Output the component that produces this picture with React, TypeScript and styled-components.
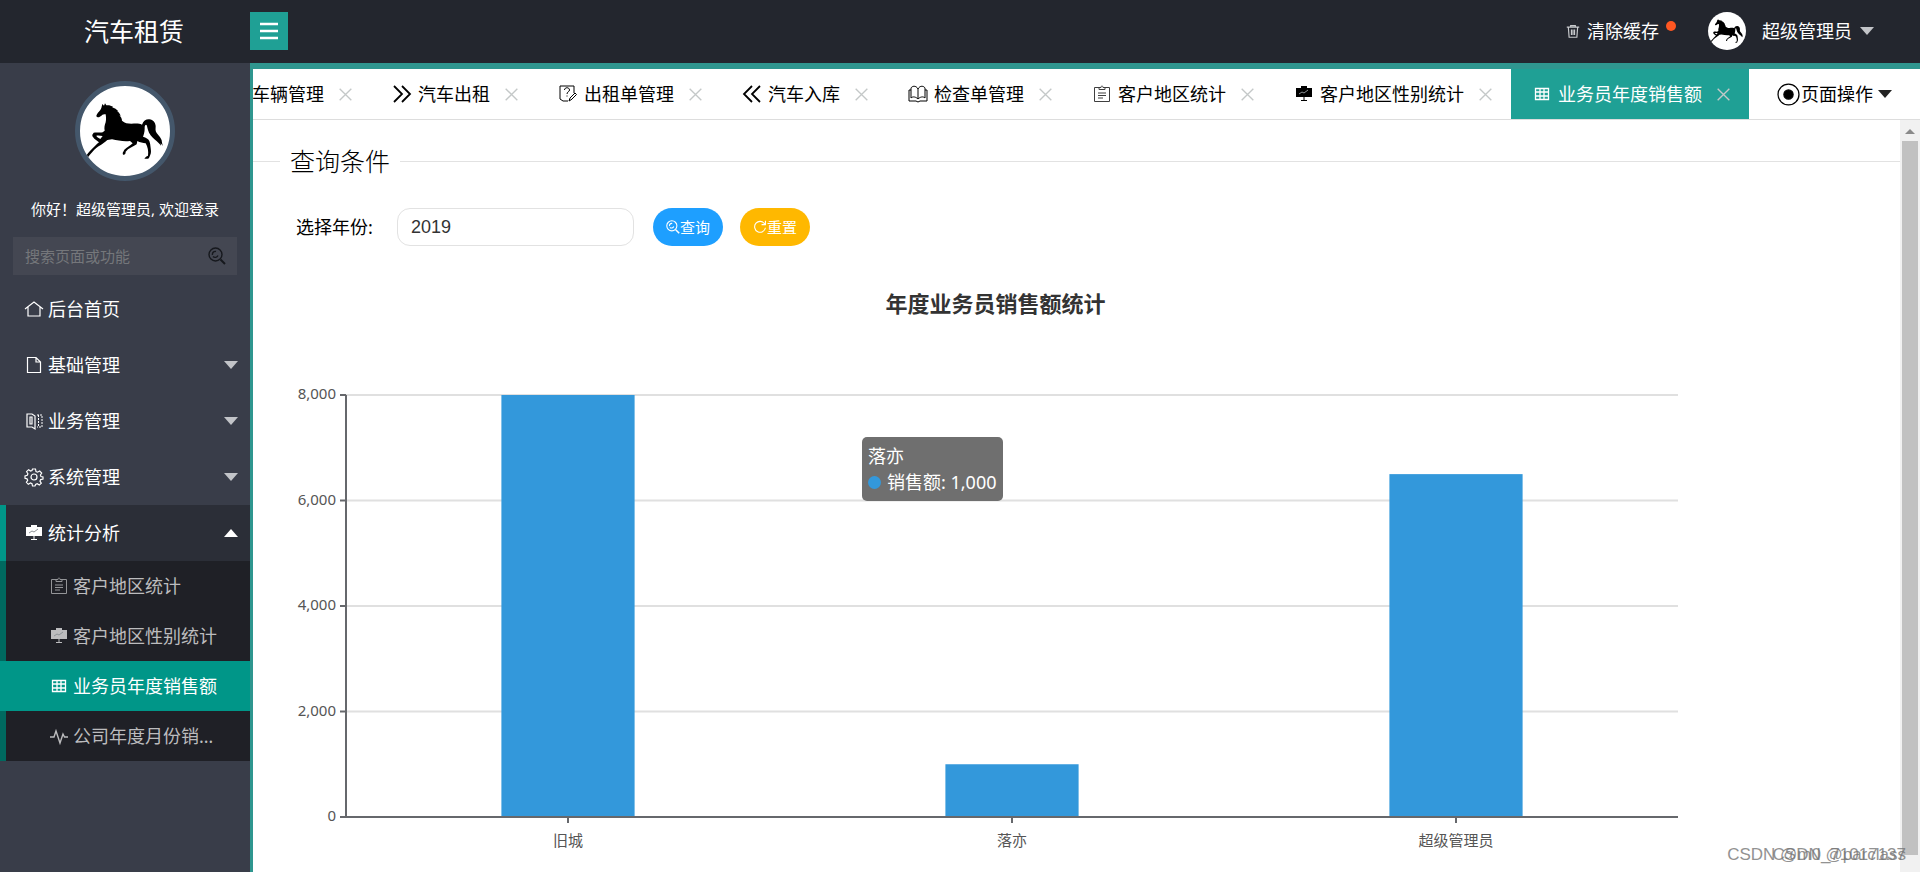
import { ReactNode, useState } from "react";
import styled, { createGlobalStyle } from "styled-components";

const TEAL = "#1fa095";

type Tab = { icon: string; label: string };
type Sale = { name: string; value: number };

const TABS: Tab[] = [
  { icon: "car", label: "车辆管理" },
  { icon: "next", label: "汽车出租" },
  { icon: "survey", label: "出租单管理" },
  { icon: "prev", label: "汽车入库" },
  { icon: "book", label: "检查单管理" },
  { icon: "form", label: "客户地区统计" },
  { icon: "board", label: "客户地区性别统计" },
  { icon: "table", label: "业务员年度销售额" },
];

const MENU: Tab[] = [
  { icon: "home", label: "后台首页" },
  { icon: "file", label: "基础管理" },
  { icon: "read", label: "业务管理" },
  { icon: "gear", label: "系统管理" },
  { icon: "board", label: "统计分析" },
];

const SUB_MENU: Tab[] = [
  { icon: "form", label: "客户地区统计" },
  { icon: "board", label: "客户地区性别统计" },
  { icon: "table", label: "业务员年度销售额" },
  { icon: "pulse", label: "公司年度月份销售额" },
];

const SALES: Sale[] = [
  { name: "旧城", value: 8000 },
  { name: "落亦", value: 1000 },
  { name: "超级管理员", value: 6500 },
];

const MAX = 8000;
const STEPS = [8000, 6000, 4000, 2000, 0];
const PLOT_HEIGHT = 422;

const ICONS: Record<string, ReactNode> = {
  car: <path d="M2 11V8l2-4h10l2 4v6H2z" />,
  next: <path d="M1 1l8 8-8 8M9 1l8 8-8 8" strokeWidth="1.8" />,
  prev: <path d="M9 1L1 9l8 8M17 1L9 9l8 8" strokeWidth="1.8" />,
  survey: (
    <>
      <path d="M15 8V1H1v13l3 2h5M5.500 5c0-3 5-3 5 0 0 2-2.500 1.500-2.500 4M8 10.500v1" />
      <path d="M10 16l1-3 5-5 1.500 1.500-5 5zM12 15l4-4" />
    </>
  ),
  book: (
    <>
      <path d="M9 4C7 0 3 1 2 3v10c2-2 5-1 7 1 2-2 5-3 7-1V3c-1-2-5-3-7 1zM9 4v10" />
      <path d="M2 5H0v11h7l2 1 2-1h7V5h-2" />
    </>
  ),
  form: (
    <g opacity="0.75">
      <path d="M6 2.500H1.500v14h15v-14H12" />
      <path d="M6 4.500v-2h2c0-2 2-2 2 0h2v2zM5 8h8M5 10.500h8M5 13h5" />
    </g>
  ),
  board: (
    <>
      <path
        d="M1 3h5V1h6v2h5v9H1z"
        fill="currentColor"
        stroke="none"
      />
      <path d="M9 12v3M6 15.500h6" />
      <path d="M4 9l3-2 2 1 4-3" stroke="#8d9296" />
    </>
  ),
  table: (
    <path
      d="M2.500 3.500h13v11h-13zM2.500 7h13M2.500 11h13M7 3.500v11M11 3.500v11"
      strokeWidth="1.300"
    />
  ),
  pulse: <path d="M0 10h4l2-6 4 12 3-9 1.500 3H18" strokeWidth="1.400" />,
  home: <path d="M0 9l9-7 9 7M3 7v9h12V7" strokeWidth="1.200" />,
  file: (
    <path
      d="M2.500 1.500H11l4.500 4.500v10.500h-13zM11 1.500V6h4.500"
      strokeWidth="1.200"
    />
  ),
  read: (
    <>
      <path d="M2 2h5l3 2v13l-3-2H2zM5 5h2v7H5z" strokeWidth="1.200" />
      <path d="M12 3h5v12h-5M13.500 3v12" strokeDasharray="2 1" />
    </>
  ),
  gear: (
    <g strokeWidth="1.200">
      <path d="M7.500 1h3l.5 2.500 1.500.7L14.700 3l2 2-1.300 2 .6 1.600 2 .4v2l-2.400.6-.6 1.500 1.300 2-2 2-2.100-1.300-1.600.7-.6 1.500h-2.500L7 15.600l-1.500-.6-2.200 1.300-1.900-2 1.300-2L2 10.800 0 10.300V8l2.300-.7.6-1.500L1.600 3.700l2-2 2 1.400L7 2.500z" />
      <circle cx="9" cy="9" r="3" />
    </g>
  ),
  search: (
    <g strokeWidth="1.400">
      <circle cx="7.500" cy="7.500" r="6.500" />
      <path d="M4.500 8c-.5-2.500 1.500-4 3.500-3.500M5 9.500c1.500 1.500 4 1 5-1" />
      <path d="M12.500 12.500l4.500 4.500" strokeWidth="2" />
    </g>
  ),
  refresh: <path d="M15 5a7 7 0 1 0 1 5M16 1v5h-5" strokeWidth="1.400" />,
  trash: (
    <path
      d="M1 4h16M6 4V2h6v2M3 4l1 13h10l1-13M7 7v7M9 7v7M11 7v7"
      strokeWidth="1.500"
      stroke="#c8cacd"
    />
  ),
  close: <path d="M2 2l14 14M16 2L2 16" strokeWidth="1.600" />,
  menu: <path d="M0 2h18M0 9h18M0 16h18" strokeWidth="2.400" />,
  target: (
    <>
      <circle cx="9" cy="9" r="8.200" />
      <circle cx="9" cy="9" r="3.600" fill="currentColor" />
    </>
  ),
};

const Icon = ({ name, size = 18 }: { name: string; size?: number }) => (
  <IconSvg viewBox="0 0 18 18" width={size} height={size} aria-hidden="true">
    {ICONS[name]}
  </IconSvg>
);

const Horse = () => (
  <svg viewBox="60 46 270 270" width="100%" height="100%" aria-hidden="true">
    <path d="M124 112l3-12 5 5 3-7 4 6c8-1 14 1 21 5l-4 1c8 2 14 6 19 12l-4-1c6 4 9 9 11 15l-4-2c5 5 8 10 8 16 8 7 17 9 28 9 12 0 22-2 32 3 4-12 13-17 22-16 12 2 18 10 19 20 0 9-2 14 3 21 8 10 13 15 15 22 1 6 1 11 4 17l-7-8 1 7c-5-8-12-13-18-18-10-8-18-17-21-29-3-9-2-15-6-16-4 1-4 5-4 12 0 10-3 18-5 24 9 3 16 6 19 13 3 8 3 14 4 21 1 8 2 14-1 20l-4 10c-3 3-9 3-14 2l5-6 6-3c2-13-1-27-7-37-8-2-17-2-25-7l-2 10c-8 6-18 9-26 15l-7 7c0 6-2 10-8 9l-1-5 5-10c8-7 17-12 25-19l-8-7c-19 2-36-1-54-5l-14 2c-9 7-14 12-21 16-9 5-16 11-22 18l-10 11-5 7-6-4c6-8 11-14 17-20 9-8 14-16 22-21l-14-11c-4-5-7-8-6-12l4-6c10-2 18 1 27-1l6-5c-2-9 0-17 3-25 2-9 1-16 0-24-8-2-10 2-14 5l-6 4c-5 0-8-1-8-5 2-6 7-11 12-17zM109 195c1 4 7 7 12 10l7-9c-7-1-13-2-19-1z" />
  </svg>
);

const BarChart = () => {
  const y = (value: number) => PLOT_HEIGHT - (value / MAX) * PLOT_HEIGHT;
  const slot = 100 / SALES.length;

  return (
    <Plot>
      <PlotSvg role="img" aria-label="年度业务员销售额统计">
        {STEPS.map((step) => (
          <g key={step}>
            <line
              x1="0"
              x2="100%"
              y1={y(step)}
              y2={y(step)}
              stroke="#e0e0e0"
            />
            <line x1="-6" x2="0" y1={y(step)} y2={y(step)} stroke="#66686c" />
            <text x="-10" y={y(step) + 4} textAnchor="end">
              {step.toLocaleString("en-US")}
            </text>
          </g>
        ))}
        {SALES.map((sale, i) => (
          <g key={sale.name}>
            <rect
              x={`${slot * (i + 0.35)}%`}
              width={`${slot * 0.3}%`}
              y={y(sale.value)}
              height={PLOT_HEIGHT - y(sale.value)}
              fill="#3398db"
            />
            <line
              x1={`${slot * (i + 0.5)}%`}
              x2={`${slot * (i + 0.5)}%`}
              y1={PLOT_HEIGHT}
              y2={PLOT_HEIGHT + 6}
              stroke="#66686c"
            />
            <text
              x={`${slot * (i + 0.5)}%`}
              y={PLOT_HEIGHT + 29}
              textAnchor="middle"
            >
              {sale.name}
            </text>
          </g>
        ))}
        <line x1="0" x2="0" y1="0" y2={PLOT_HEIGHT} stroke="#66686c" />
        <line
          x1="0"
          x2="100%"
          y1={PLOT_HEIGHT}
          y2={PLOT_HEIGHT}
          stroke="#66686c"
        />
      </PlotSvg>
      <Tooltip>
        落亦
        <TooltipRow>
          <SeriesDot />
          销售额: 1,000
        </TooltipRow>
      </Tooltip>
    </Plot>
  );
};

const App = () => {
  const [year, setYear] = useState("2019");
  const [keyword, setKeyword] = useState("");
  const [current, setCurrent] = useState("业务员年度销售额");
  const [open, setOpen] = useState("统计分析");

  return (
    <Page>
      <GlobalStyle />
      <Header>
        <Brand>汽车租赁</Brand>
        <Toggle aria-label="菜单">
          <Icon name="menu" />
        </Toggle>
        <HeaderTools>
          <HeaderLink href="#cache">
            <Icon name="trash" size={14} />
            清除缓存
            <Notice />
          </HeaderLink>
          <HeaderUser href="#user">
            <SmallAvatar>
              <Horse />
            </SmallAvatar>
            超级管理员
            <Caret />
          </HeaderUser>
        </HeaderTools>
      </Header>
      <Body>
        <Sidebar>
          <Avatar>
            <Horse />
          </Avatar>
          <Greeting>你好！超级管理员, 欢迎登录</Greeting>
          <Search>
            <SearchInput
              aria-label="搜索"
              placeholder="搜索页面或功能"
              value={keyword}
              onChange={(e) => setKeyword(e.target.value)}
            />
            <Icon name="search" />
          </Search>
          <nav>
            {MENU.map(({ icon, label }, i) => (
              <MenuItem
                key={label}
                $open={open === label}
                onClick={() => setOpen(open === label ? "" : label)}
              >
                <Icon name={icon} />
                <MenuLabel>{label}</MenuLabel>
                {i > 0 && <Caret $up={open === label} />}
              </MenuItem>
            ))}
            {open === "统计分析" && (
              <SubMenu>
                {SUB_MENU.map(({ icon, label }) => (
                  <SubItem
                    key={label}
                    href="#page"
                    $active={current === label}
                    onClick={() => setCurrent(label)}
                  >
                    <Icon name={icon} />
                    <MenuLabel>{label}</MenuLabel>
                  </SubItem>
                ))}
              </SubMenu>
            )}
          </nav>
        </Sidebar>
        <Main>
          <TabBar>
            <TabList>
              {TABS.map(({ icon, label }) => (
                <TabItem key={label} $active={current === label}>
                  <TabButton onClick={() => setCurrent(label)}>
                    <Icon name={icon} />
                    {label}
                  </TabButton>
                  <CloseButton aria-label={`关闭${label}`}>
                    <Icon name="close" size={15} />
                  </CloseButton>
                </TabItem>
              ))}
            </TabList>
            <PageActions>
              <Icon name="target" size={23} />
              页面操作
              <Caret $dark />
            </PageActions>
          </TabBar>
          <Frame>
            <Content>
              <Fieldset>
                <Legend>查询条件</Legend>
                <Form onSubmit={(e) => e.preventDefault()}>
                  <Label htmlFor="year">选择年份:</Label>
                  <YearInput
                    id="year"
                    value={year}
                    onChange={(e) => setYear(e.target.value)}
                  />
                  <PillButton $color="#1e9fff" type="submit">
                    <Icon name="search" size={14} />
                    查询
                  </PillButton>
                  <PillButton
                    $color="#ffb800"
                    type="button"
                    onClick={() => setYear("2019")}
                  >
                    <Icon name="refresh" size={14} />
                    重置
                  </PillButton>
                </Form>
              </Fieldset>
              <Chart>
                <ChartTitle>年度业务员销售额统计</ChartTitle>
                <BarChart />
              </Chart>
            </Content>
            <Scrollbar>
              <ScrollArrow />
              <ScrollThumb />
            </Scrollbar>
          </Frame>
        </Main>
      </Body>
      <Watermark>CSDN @m0_71017137</Watermark>
      <Watermark>CSDN @parclass</Watermark>
    </Page>
  );
};

const GlobalStyle = createGlobalStyle`
  * {
    box-sizing: border-box;
  }
  body {
    margin: 0;
    color: #000;
    font: 400 18px/26px "Noto Sans", "Noto Sans CJK SC", sans-serif;
  }
  button, input {
    font: inherit;
    color: inherit;
    border: none;
    background: none;
    padding: 0;
  }
  button {
    cursor: pointer;
  }
  a {
    color: inherit;
    text-decoration: none;
  }
`;
const IconSvg = styled.svg`
  flex: none;
  fill: none;
  stroke: currentColor;
  overflow: visible;
`;
const Page = styled.div`
  position: relative;
  display: flex;
  flex-direction: column;
  min-height: 100vh;
`;
const Header = styled.header`
  display: flex;
  align-items: center;
  height: 63px;
  padding-bottom: 1px;
  background: #23262e;
  color: #fff;
`;
const Brand = styled.div`
  width: 250px;
  padding-left: 18px;
  text-align: center;
  font-size: 25px;
`;
const Toggle = styled.button`
  display: flex;
  align-items: center;
  justify-content: center;
  width: 38px;
  height: 38px;
  background: ${TEAL};
`;
const HeaderTools = styled.div`
  display: flex;
  align-items: center;
  gap: 32px;
  margin-left: auto;
  padding-right: 46px;
`;
const HeaderLink = styled.a`
  display: flex;
  align-items: center;
  gap: 7px;
`;
const HeaderUser = styled(HeaderLink)`
  gap: 8px;
`;
const Notice = styled.i`
  width: 10px;
  height: 10px;
  margin-bottom: 10px;
  border-radius: 50%;
  background: #ff5722;
`;
const SmallAvatar = styled.span`
  display: flex;
  width: 38px;
  height: 38px;
  margin-right: 8px;
  border-radius: 50%;
  overflow: hidden;
  background: #fff;
`;
const Caret = styled.i<{ $up?: boolean; $dark?: boolean }>`
  flex: none;
  border: 7px solid transparent;
  border-top: 8px solid ${(p) => (p.$dark ? "#222" : "#c2c4c8")};
  border-bottom: none;
  ${(p) => p.$up && "border-top: none; border-bottom: 8px solid #fff;"}
`;
const Body = styled.div`
  display: flex;
  flex: 1;
`;
const Sidebar = styled.aside`
  flex: none;
  width: 250px;
  padding-top: 18px;
  background: #393d49;
  color: #fff;
`;
const Avatar = styled.div`
  width: 100px;
  height: 100px;
  margin: 0 auto;
  border: 5px solid #44576b;
  border-radius: 50%;
  overflow: hidden;
  background: #fff;
`;
const Greeting = styled.p`
  margin: 15px 0;
  text-align: center;
  font-size: 15px;
`;
const Search = styled.div`
  display: flex;
  align-items: center;
  height: 38px;
  margin: 0 13px 6px;
  padding: 0 11px 0 12px;
  background: #444752;
  color: #16181d;
`;
const SearchInput = styled.input`
  flex: 1;
  min-width: 0;
  font-size: 15px;
  color: #fff;
  outline: none;
  &::placeholder {
    color: #75777b;
  }
`;
const MenuItem = styled.button<{ $open: boolean }>`
  display: flex;
  align-items: center;
  gap: 5px;
  width: 100%;
  height: 56px;
  padding: 0 12px 0 19px;
  border-left: 6px solid ${(p) => (p.$open ? "#009688" : "transparent")};
  background: ${(p) => (p.$open ? "#2b2e37" : "none")};
`;
const MenuLabel = styled.span`
  flex: 1;
  min-width: 0;
  overflow: hidden;
  text-align: left;
  text-overflow: ellipsis;
  white-space: nowrap;
`;
const SubMenu = styled.div`
  background: #1f2026;
`;
const SubItem = styled.a<{ $active: boolean }>`
  display: flex;
  align-items: center;
  gap: 5px;
  height: 50px;
  padding: 0 33px 0 44px;
  border-left: 6px solid ${(p) => (p.$active ? "#009688" : "#00695f")};
  background: ${(p) => (p.$active ? "#009688" : "none")};
  color: ${(p) => (p.$active ? "#fff" : "#bcbcbe")};
`;
const Main = styled.main`
  flex: 1;
  min-width: 0;
  display: flex;
  flex-direction: column;
  border-top: 6px solid #2f968f;
  border-left: 3px solid #2f968f;
  background: #fff;
`;
const TabBar = styled.div`
  display: flex;
  height: 51px;
  border-bottom: 1px solid #ddd;
`;
const TabList = styled.div`
  display: flex;
  flex: 1;
  justify-content: flex-end;
  min-width: 0;
  overflow: hidden;
`;
const TabItem = styled.div<{ $active: boolean }>`
  display: flex;
  flex: none;
  align-items: center;
  gap: 14px;
  padding: 0 18px 0 22px;
  background: ${(p) => (p.$active ? TEAL : "none")};
  color: ${(p) => (p.$active ? "#fff" : "#000")};
`;
const TabButton = styled.button`
  display: flex;
  align-items: center;
  gap: 7px;
`;
const CloseButton = styled.button`
  display: flex;
  color: #c4c8c8;
`;
const PageActions = styled.button`
  display: flex;
  align-items: center;
  gap: 1px;
  padding: 0 28px;
  ${Caret} {
    margin-left: 4px;
  }
`;
const Frame = styled.div`
  display: flex;
  flex: 1;
`;
const Content = styled.div`
  flex: 1;
  min-width: 0;
  padding-top: 22px;
`;
const Fieldset = styled.fieldset`
  margin: 0;
  padding: 0;
  border: none;
  border-top: 1px solid #e2e2e2;
`;
const Legend = styled.legend`
  margin-left: 27px;
  padding: 0 10px;
  font-size: 25px;
  font-weight: 300;
  line-height: 38px;
`;
const Form = styled.form`
  display: flex;
  align-items: center;
  padding: 28px 0 0 43px;
`;
const Label = styled.label`
  width: 101px;
`;
const YearInput = styled.input`
  width: 237px;
  height: 38px;
  margin-right: 19px;
  padding: 0 13px;
  border: 1px solid #e2e2e2;
  border-radius: 13px;
  font-family: "Liberation Sans", sans-serif;
  color: #333;
`;
const PillButton = styled.button<{ $color: string }>`
  display: flex;
  align-items: center;
  justify-content: center;
  width: 70px;
  height: 38px;
  margin-right: 17px;
  border-radius: 19px;
  font-size: 15px;
  color: #fff;
  background: ${(p) => p.$color};
`;
const Chart = styled.section`
  margin: 44px 222px 0 60px;
`;
const ChartTitle = styled.h2`
  margin: 0 0 79px;
  text-align: center;
  font-size: 22px;
  font-weight: 700;
  color: #333;
`;
const Plot = styled.div`
  position: relative;
  margin-left: 33px;
  padding-bottom: 38px;
`;
const PlotSvg = styled.svg`
  display: block;
  width: 100%;
  height: ${PLOT_HEIGHT}px;
  overflow: visible;
  font-size: 15px;
  fill: #555;
  stroke-width: 2px;
  text {
    stroke: none;
  }
`;
const Tooltip = styled.div`
  position: absolute;
  left: 516px;
  top: 42px;
  padding: 6px;
  border-radius: 5px;
  background: #6f6f6f;
  color: #fff;
  white-space: nowrap;
`;
const TooltipRow = styled.div`
  display: flex;
  align-items: center;
  gap: 6px;
`;
const SeriesDot = styled.i`
  width: 13px;
  height: 13px;
  border-radius: 50%;
  background: #3398db;
`;
const Scrollbar = styled.div`
  display: flex;
  flex-direction: column;
  align-items: center;
  width: 20px;
  padding: 9px 0 17px;
  background: #f1f1f1;
`;
const ScrollArrow = styled.i`
  border: 5px solid transparent;
  border-top: none;
  border-bottom: 5px solid #8a8a8a;
`;
const ScrollThumb = styled.div`
  flex: 1;
  width: 16px;
  margin-top: 7px;
  background: #c1c1c1;
`;
const Watermark = styled.span`
  position: absolute;
  right: 14px;
  bottom: 4px;
  font-family: "Liberation Sans", sans-serif;
  font-size: 17px;
  color: #777;
  opacity: 0.8;
`;

export default App;
